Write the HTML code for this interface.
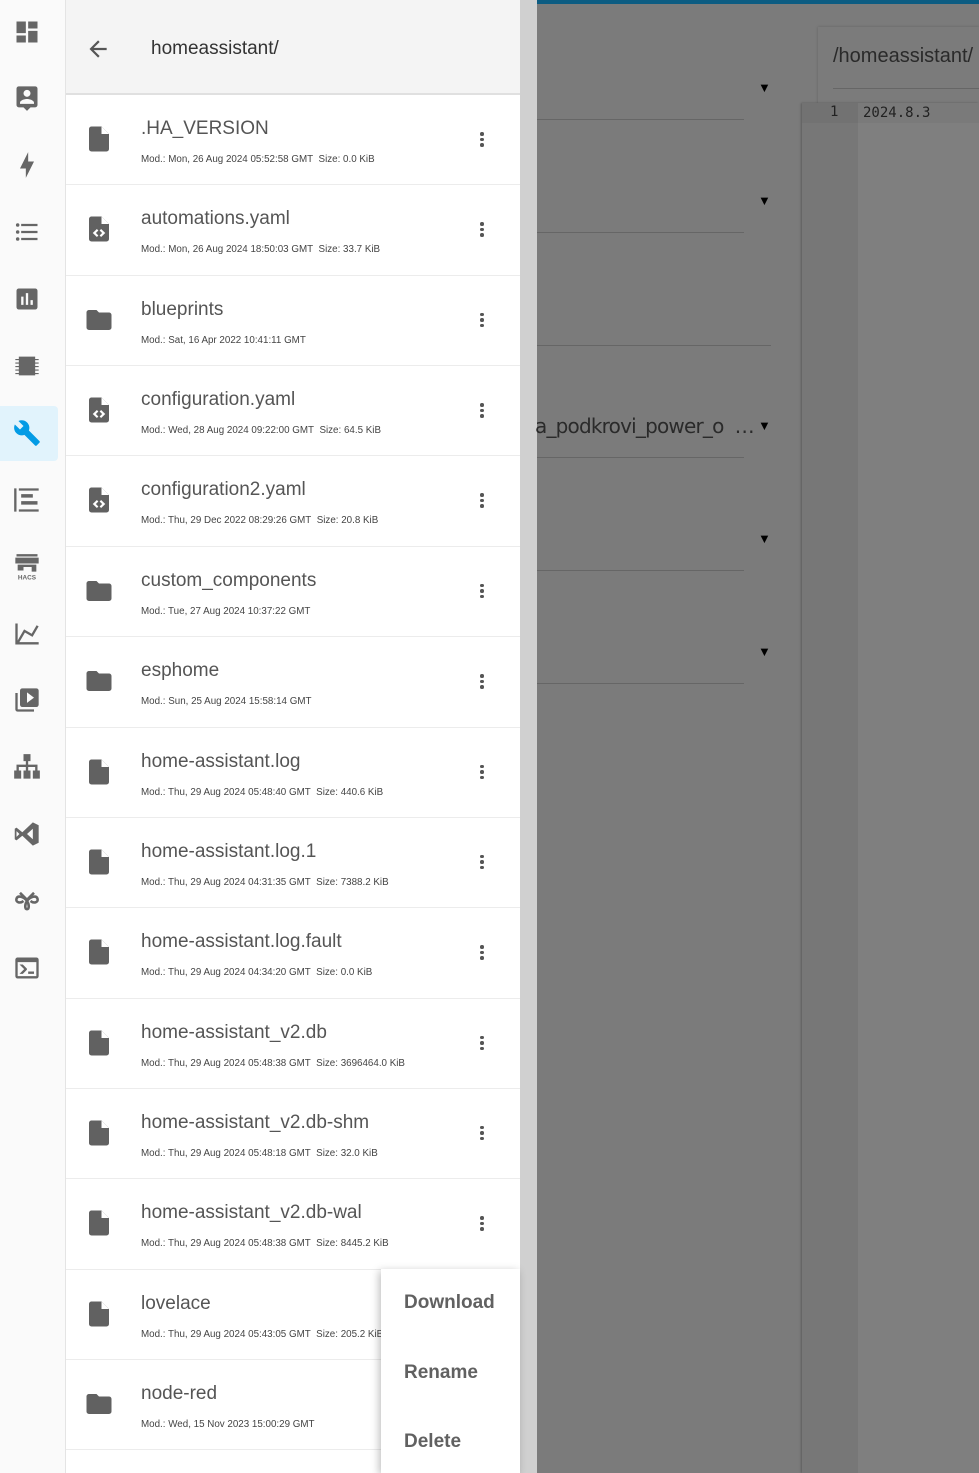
<!DOCTYPE html>
<html><head><meta charset="utf-8"><style>
*{margin:0;padding:0;box-sizing:border-box}
body{width:979px;height:1473px;overflow:hidden;position:relative;font-family:"Liberation Sans",sans-serif;background:#7b7b7b}
.abs{position:absolute}
#side{left:0;top:0;width:66px;height:1473px;background:#fafafa;border-right:1px solid #e4e4e4}
.si{position:absolute;left:13px;width:28px;height:28px}
#panel{left:66px;top:0;width:454px;height:1473px;background:#fff}
#hdr{left:0;top:0;width:454px;height:95px;background:#f4f4f4;border-bottom:2px solid #e0e0e0}
.row{position:absolute;left:0;width:454px;height:90.36px;border-bottom:1px solid #ececec}
.row svg.ic{position:absolute;left:18px;top:29px;width:30px;height:30px}
.t{position:absolute;left:75px;top:23px;font-size:19px;color:#555;white-space:nowrap}
.m{position:absolute;left:75px;top:59px;font-size:9.8px;color:#444;white-space:nowrap}
.dots{position:absolute;left:414px;top:37px;width:4px}
.dots i{display:block;width:3.5px;height:3.5px;border-radius:50%;background:#555;margin-bottom:2px}
.ul{position:absolute;left:537px;height:1px;background:#666}
.tri{position:absolute;left:758px;font-size:13px;color:#000}
.mi{position:absolute;left:23px;font-size:19px;font-weight:bold;color:#616161}
</style></head><body>
<div class="abs" style="left:520px;top:0;width:17px;height:1473px;background:#d0d0d0"></div>
<div class="abs" style="left:537px;top:0;width:442px;height:4px;background:#0c5c82"></div>
<div class="ul" style="top:119px;width:207px"></div>
<div class="ul" style="top:232px;width:207px"></div>
<div class="ul" style="top:345px;width:234px"></div>
<div class="ul" style="top:457px;width:207px"></div>
<div class="ul" style="top:570px;width:207px"></div>
<div class="ul" style="top:683px;width:207px"></div>
<div class="tri" style="top:80px">▼</div>
<div class="tri" style="top:193px">▼</div>
<div class="tri" style="top:418px">▼</div>
<div class="tri" style="top:531px">▼</div>
<div class="tri" style="top:644px">▼</div>
<div class="abs" style="left:535px;top:414px;font-size:20px;color:#2a2a2a;font-family:'DejaVu Sans',sans-serif;letter-spacing:-0.8px">a_podkrovi_power_o&nbsp; …</div>
<div class="abs" style="left:818px;top:27px;width:161px;height:80px;background:#7b7b7b;box-shadow:0 0 3px rgba(0,0,0,.2)"></div>
<div class="abs" style="left:833px;top:45px;font-size:20px;color:#2a2a2a;white-space:nowrap">/homeassistant/</div>
<div class="abs" style="left:833px;top:88px;width:146px;height:1px;background:#666"></div>
<div class="abs" style="left:802px;top:103px;width:177px;height:1370px;background:#7f7f7f;box-shadow:-1px 0 2px rgba(0,0,0,.25)"></div>
<div class="abs" style="left:802px;top:103px;width:56px;height:1370px;background:#777"></div>
<div class="abs" style="left:802px;top:103px;width:177px;height:20px;background:rgba(0,0,0,.04)"></div>
<div class="abs" style="left:830px;top:104px;font-family:'DejaVu Sans Mono',monospace;font-size:14px;color:#222">1</div>
<div class="abs" style="left:863px;top:105px;font-family:'DejaVu Sans Mono',monospace;font-size:14px;color:#222">2024.8.3</div>

<div id="side" class="abs">
<div class="abs" style="left:0;top:406px;width:58px;height:55px;background:#e1f3fc;border-radius:0 4px 4px 0"></div>
<svg class="si" style="top:18px" viewBox="0 0 24 24" fill="#666"><path d="M13,3V9H21V3M13,21H21V11H13M3,21H11V15H3M3,13H11V3H3V13Z"/></svg>
<svg class="si" style="top:84px" viewBox="0 0 24 24" fill="#666"><path d="M19,2H5A2,2 0 0,0 3,4V18A2,2 0 0,0 5,20H9L12,23L15,20H19A2,2 0 0,0 21,18V4A2,2 0 0,0 19,2M12,5A3,3 0 0,1 15,8A3,3 0 0,1 12,11A3,3 0 0,1 9,8A3,3 0 0,1 12,5M18,17H6V16C6,14 10,12.9 12,12.9C14,12.9 18,14 18,16V17Z"/></svg>
<svg class="si" style="top:151px" viewBox="0 0 24 24" fill="#666"><path d="M11,15H6L13,1V9H18L11,23V15Z"/></svg>
<svg class="si" style="top:218px" viewBox="0 0 24 24" fill="#666"><path d="M7,5H21V7H7V5M7,13V11H21V13H7M4,4.5A1.5,1.5 0 0,1 5.5,6A1.5,1.5 0 0,1 4,7.5A1.5,1.5 0 0,1 2.5,6A1.5,1.5 0 0,1 4,4.5M4,10.5A1.5,1.5 0 0,1 5.5,12A1.5,1.5 0 0,1 4,13.5A1.5,1.5 0 0,1 2.5,12A1.5,1.5 0 0,1 4,10.5M7,19V17H21V19H7M4,16.5A1.5,1.5 0 0,1 5.5,18A1.5,1.5 0 0,1 4,19.5A1.5,1.5 0 0,1 2.5,18A1.5,1.5 0 0,1 4,16.5Z"/></svg>
<svg class="si" style="top:285px" viewBox="0 0 24 24" fill="#666"><path d="M19,3H5A2,2 0 0,0 3,5V19A2,2 0 0,0 5,21H19A2,2 0 0,0 21,19V5A2,2 0 0,0 19,3M9,17H7V10H9V17M13,17H11V7H13V17M17,17H15V13H17V17Z"/></svg>
<svg class="si" style="top:352px" viewBox="0 0 24 24" fill="#666"><path d="M5,4H19V20H5V4M2,6H5V7H2V6M2,9H5V10H2V9M2,12H5V13H2V12M2,15H5V16H2V15M2,18H5V19H2V18M19,6H22V7H19V6M19,9H22V10H19V9M19,12H22V13H19V12M19,15H22V16H19V15M19,18H22V19H19V18Z"/></svg>
<svg class="si" style="top:419px" viewBox="0 0 24 24" fill="#039be5"><path d="M22.7,19L13.6,9.9C14.5,7.6 14,4.9 12.1,3C10.1,1 7.1,0.6 4.7,1.7L9,6L6,9L1.6,4.7C0.4,7.1 0.9,10.1 2.9,12.1C4.8,14 7.5,14.5 9.8,13.6L18.9,22.7C19.3,23.1 19.9,23.1 20.3,22.7L22.6,20.4C23.1,20 23.1,19.3 22.7,19Z"/></svg>
<svg class="si" style="top:486px" viewBox="0 0 24 24" fill="#666"><path d="M1,2H3V22H1V2M5,2H22V4H5V2M5,20H22V22H5V20M7,7H17V10H7V7M7,13H21V16H7V13Z"/></svg>
<svg class="si" style="top:553px" viewBox="0 0 24 24" fill="#666"><path d="M3,1H21V3H3V1M2,4H22V9H2V4M4,10H20V16H16V12H4V10M4,12H9V15H4Z"/><text x="12" y="22.5" font-size="5.5" text-anchor="middle" font-family="Liberation Sans" font-weight="bold" fill="#666">HACS</text></svg>
<svg class="si" style="top:620px" viewBox="0 0 24 24" fill="#666"><path d="M16,11.78L20.24,4.45L21.97,5.45L16.74,14.5L10.23,10.75L5.46,19H22V21H2V3H4V17.54L9.5,8L16,11.78Z"/></svg>
<svg class="si" style="top:686px" viewBox="0 0 24 24" fill="#666"><path d="M4,6H2V20A2,2 0 0,0 4,22H18V20H4V6M20,2H8A2,2 0 0,0 6,4V16A2,2 0 0,0 8,18H20A2,2 0 0,0 22,16V4A2,2 0 0,0 20,2M12,14.5V5.5L18,10L12,14.5Z"/></svg>
<svg class="si" style="top:753px" viewBox="0 0 24 24" fill="#666"><path d="M9,1H15V7H13V10H21V15H23V22H17V15H19V12H13V15H15V22H9V15H11V12H5V15H7V22H1V15H3V10H11V7H9V1Z"/></svg>
<svg class="si" style="top:820px" viewBox="0 0 24 24" fill="#666"><path d="M17,2L22,4.5V19.5L17,22L8,13.5L3,17.5L1.5,16.5V7.5L3,6.5L8,10.5L17,2M17,7.5L12,12L17,16.5V7.5M3,9.5V14.5L5.5,12L3,9.5Z"/></svg>
<svg class="si" style="top:887px" viewBox="0 0 24 24" fill="none" stroke="#666" stroke-width="2.2"><path d="M12,12C9,8 4,7 3,10C2,13 6,14.5 9,12M12,12C15,8 20,7 21,10C22,13 18,14.5 15,12M12,12C10,15 10,19 12,19C14,19 14,15 12,12M6,5L12,11L18,5"/></svg>
<svg class="si" style="top:954px" viewBox="0 0 24 24" fill="#666"><path d="M20,19V7H4V19H20M20,3A2,2 0 0,1 22,5V19A2,2 0 0,1 20,21H4A2,2 0 0,1 2,19V5C2,3.89 2.9,3 4,3H20M13,17V15H18V17H13M9.58,13L5.57,9H8.4L11.7,12.3C12.09,12.69 12.09,13.33 11.7,13.72L8.42,17H5.59L9.58,13Z"/></svg>
</div>

<div id="panel" class="abs">
<div id="hdr" class="abs">
<svg class="abs" style="left:19px;top:36px;width:26px;height:26px" viewBox="0 0 24 24" fill="#555"><path d="M20,11V13H8L13.5,18.5L12.08,19.92L4.16,12L12.08,4.08L13.5,5.5L8,11H20Z"/></svg>
<div class="abs" style="left:85px;top:38px;font-size:19px;color:#333">homeassistant/</div>
</div>
<div id="rows"></div>
</div>

<div class="abs" style="left:381px;top:1269px;width:139px;height:204px;background:#fff;box-shadow:-2px 2px 8px rgba(0,0,0,.25)">
<div class="mi" style="top:23px">Download</div>
<div class="mi" style="top:93px">Rename</div>
<div class="mi" style="top:162px">Delete</div>
</div>

<script>
var F='<svg class="ic" viewBox="0 0 24 24" fill="#616161"><path d="M6,2C4.89,2 4,2.89 4,4V20A2,2 0 0,0 6,22H18A2,2 0 0,0 20,20V8L14,2H6Z"/><path d="M14,2V8H20Z" fill="#fff"/></svg>';
var C='<svg class="ic" viewBox="0 0 24 24" fill="#616161"><path d="M6,2C4.89,2 4,2.89 4,4V20A2,2 0 0,0 6,22H18A2,2 0 0,0 20,20V8L14,2H6Z"/><path d="M14,2V8H20Z" fill="#fff"/><path d="M10.3,12L7,15.2L10.3,18.4L11.5,17.2L9.5,15.2L11.5,13.2ZM13.7,12L12.5,13.2L14.5,15.2L12.5,17.2L13.7,18.4L17,15.2Z" fill="#fff"/></svg>';
var D='<svg class="ic" viewBox="0 0 24 24" fill="#616161"><path d="M10,4H4C2.89,4 2,4.89 2,6V18A2,2 0 0,0 4,20H20A2,2 0 0,0 22,18V8C22,6.89 21.1,6 20,6H12L10,4Z"/></svg>';
var R=[[F,'.HA_VERSION','Mon, 26 Aug 2024 05:52:58 GMT','0.0'],
[C,'automations.yaml','Mon, 26 Aug 2024 18:50:03 GMT','33.7'],
[D,'blueprints','Sat, 16 Apr 2022 10:41:11 GMT',''],
[C,'configuration.yaml','Wed, 28 Aug 2024 09:22:00 GMT','64.5'],
[C,'configuration2.yaml','Thu, 29 Dec 2022 08:29:26 GMT','20.8'],
[D,'custom_components','Tue, 27 Aug 2024 10:37:22 GMT',''],
[D,'esphome','Sun, 25 Aug 2024 15:58:14 GMT',''],
[F,'home-assistant.log','Thu, 29 Aug 2024 05:48:40 GMT','440.6'],
[F,'home-assistant.log.1','Thu, 29 Aug 2024 04:31:35 GMT','7388.2'],
[F,'home-assistant.log.fault','Thu, 29 Aug 2024 04:34:20 GMT','0.0'],
[F,'home-assistant_v2.db','Thu, 29 Aug 2024 05:48:38 GMT','3696464.0'],
[F,'home-assistant_v2.db-shm','Thu, 29 Aug 2024 05:48:18 GMT','32.0'],
[F,'home-assistant_v2.db-wal','Thu, 29 Aug 2024 05:48:38 GMT','8445.2'],
[F,'lovelace','Thu, 29 Aug 2024 05:43:05 GMT','205.2'],
[D,'node-red','Wed, 15 Nov 2023 15:00:29 GMT','']];
var h='';
R.forEach(function(r,i){
h+='<div class="row" style="top:'+(95+i*90.36)+'px">'+r[0]+'<div class="t">'+r[1]+'</div><div class="m">Mod.: '+r[2]+(r[3]?'&nbsp; Size: '+r[3]+' KiB':'')+'</div><div class="dots"><i></i><i></i><i></i></div></div>';
});
document.getElementById('rows').innerHTML=h;
</script>
</body></html>
